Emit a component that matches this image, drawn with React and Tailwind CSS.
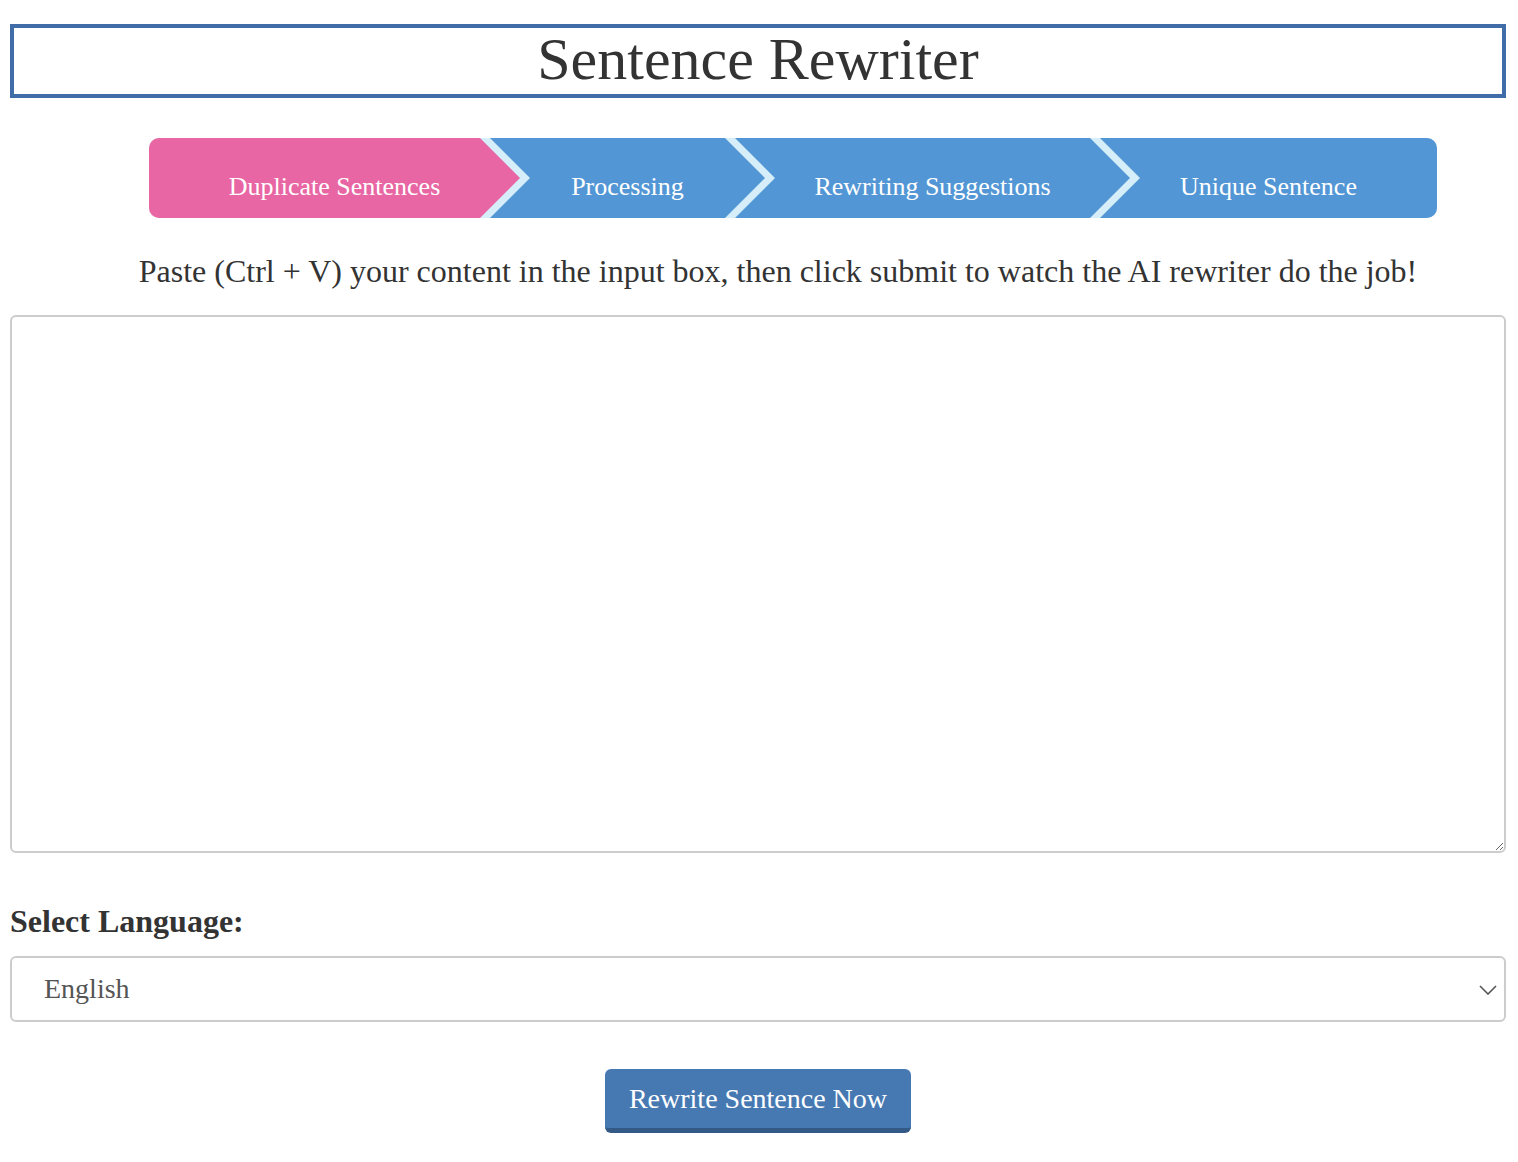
import React from "react";

export default function App() {
  return (
    <div className="pl-[10px] pr-[12px] pt-[24px] pb-[30px] font-['Liberation_Serif','Times_New_Roman',serif] text-[#333]">
      <h1 className="border-4 border-[#406da8] h-[74px] text-center text-[60px] leading-[62px] font-normal">
        Sentence Rewriter
      </h1>

      <div className="mt-[40px] ml-[139px] flex w-[1288px] h-[80px] bg-[#d6eefa] rounded-[10px] overflow-hidden">
        <div className="w-[371px] shrink-0 bg-[#e866a3] flex items-center justify-center pt-[16px] text-white text-[26px] [clip-path:polygon(0_0,calc(100%_-_40px)_0,100%_50%,calc(100%_-_40px)_100%,0_100%)]">
          Duplicate Sentences
        </div>
        <div className="ml-[-30px] w-[275px] shrink-0 bg-[#5296d5] flex items-center justify-center pt-[16px] text-white text-[26px] [clip-path:polygon(0_0,calc(100%_-_40px)_0,100%_50%,calc(100%_-_40px)_100%,0_100%,40px_50%)]">
          Processing
        </div>
        <div className="ml-[-30px] w-[395px] shrink-0 bg-[#5296d5] flex items-center justify-center pt-[16px] text-white text-[26px] [clip-path:polygon(0_0,calc(100%_-_40px)_0,100%_50%,calc(100%_-_40px)_100%,0_100%,40px_50%)]">
          Rewriting Suggestions
        </div>
        <div className="ml-[-30px] w-[337px] shrink-0 bg-[#5296d5] flex items-center justify-center pt-[16px] text-white text-[26px] [clip-path:polygon(0_0,100%_0,100%_100%,0_100%,40px_50%)]">
          Unique Sentence
        </div>
      </div>

      <p className="mt-[35px] pl-[40px] text-center text-[32px] leading-[36px]">
        Paste (Ctrl + V) your content in the input box, then click submit to watch the AI rewriter do the job!
      </p>

      <textarea className="mt-[26px] block w-full h-[538px] border-2 border-[#ccc] rounded-[6px] bg-white outline-none p-[10px] text-[20px]"></textarea>

      <label className="mt-[50px] block text-[32px] leading-[36px] font-bold">Select Language:</label>

      <div className="relative mt-[17px]">
        <select className="appearance-none block w-full h-[66px] border-2 border-[#ccc] rounded-[6px] bg-white pl-[32px] text-[28px] text-[#555] outline-none font-['Liberation_Serif','Times_New_Roman',serif]">
          <option>English</option>
        </select>
        <svg className="absolute right-[9px] top-[29px] pointer-events-none" width="18" height="10" viewBox="0 0 18 10" fill="none">
          <path d="M1 1 L9 9 L17 1" stroke="#555" strokeWidth="1.6" />
        </svg>
      </div>

      <div className="mt-[47px] flex justify-center">
        <button className="w-[306px] h-[64px] bg-[#4679b2] border-b-[5px] border-[#335a86] rounded-[6px] text-white text-[28px] font-['Liberation_Serif','Times_New_Roman',serif]">
          Rewrite Sentence Now
        </button>
      </div>
    </div>
  );
}
